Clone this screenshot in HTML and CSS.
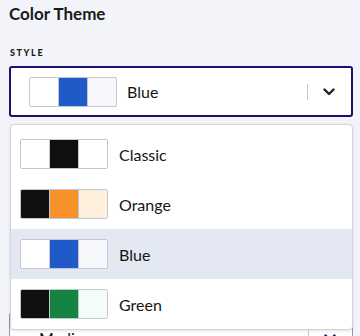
FILE: index.html
```html
<!DOCTYPE html>
<html lang="en">

<head>
    <meta charset="UTF-8">
    <meta name="viewport" content="width=device-width, initial-scale=1.0">
    <title>Color Theme</title>
    <link rel="stylesheet" href="styles.css">
</head>

<body>
    <div class="painel">
        <h2 class="titulo">Color Theme</h2>

        <div class="campo">
            <label class="rotulo">Style</label>
            <div class="select ativo">
                <span class="swatch">
                    <span class="cor" style="background:#ffffff"></span>
                    <span class="cor" style="background:#1f5bc6"></span>
                    <span class="cor" style="background:#f5f7fa"></span>
                </span>
                <span class="valor">Blue</span>
                <span class="divisor"></span>
                <svg class="seta" width="12" height="8" viewBox="0 0 12 8">
                    <path d="M1.5 1.5 L6 6 L10.5 1.5" fill="none" stroke="#222" stroke-width="2.4" stroke-linecap="round" stroke-linejoin="round"/>
                </svg>
            </div>

            <ul class="menu">
                <li class="opcao">
                    <span class="swatch">
                        <span class="cor" style="background:#ffffff"></span>
                        <span class="cor" style="background:#101010"></span>
                        <span class="cor" style="background:#ffffff"></span>
                    </span>
                    <span class="valor">Classic</span>
                </li>
                <li class="opcao">
                    <span class="swatch">
                        <span class="cor" style="background:#101010"></span>
                        <span class="cor" style="background:#f7922a"></span>
                        <span class="cor" style="background:#fdf1de"></span>
                    </span>
                    <span class="valor">Orange</span>
                </li>
                <li class="opcao selecionada">
                    <span class="swatch">
                        <span class="cor" style="background:#ffffff"></span>
                        <span class="cor" style="background:#1f5bc6"></span>
                        <span class="cor" style="background:#f5f7fa"></span>
                    </span>
                    <span class="valor">Blue</span>
                </li>
                <li class="opcao">
                    <span class="swatch">
                        <span class="cor" style="background:#101010"></span>
                        <span class="cor" style="background:#148540"></span>
                        <span class="cor" style="background:#f3fdf8"></span>
                    </span>
                    <span class="valor">Green</span>
                </li>
            </ul>
        </div>

        <div class="campo campo-tamanho">
            <label class="rotulo">Size</label>
            <div class="select">
                <span class="valor texto-medio">Medium</span>
                <span class="divisor"></span>
                <svg class="seta" width="12" height="8" viewBox="0 0 12 8">
                    <path d="M1.5 1.5 L6 6 L10.5 1.5" fill="none" stroke="#1b0f70" stroke-width="2.4" stroke-linecap="round" stroke-linejoin="round"/>
                </svg>
            </div>
        </div>
    </div>
</body>

</html>
```

FILE: styles.css
```css
/* Estilização Página */
* {
    box-sizing: border-box;
    font-family: 'Lato', 'Open Sans', sans-serif;
    margin: 0;
    padding: 0;
}

body {
    background-color: #f3f4f9;
    color: #111;
}

.painel {
    padding: 2px 7px 0 9px;
}

.titulo {
    font-size: 17px;
    font-weight: 700;
    line-height: 24px;
    color: #1a1a1a;
}

.campo {
    position: relative;
    margin-top: 21px;
}

.campo-tamanho {
    margin-top: 176px;
}

.rotulo {
    display: block;
    font-size: 9px;
    font-weight: 900;
    letter-spacing: 1.6px;
    text-transform: uppercase;
    line-height: 12px;
    margin-left: 1px;
    margin-bottom: 7px;
    color: #1a1a1a;
}

.select {
    display: flex;
    align-items: center;
    height: 51px;
    padding: 0 16px 0 18px;
    background-color: #fff;
    border: 1px solid #9a9ca4;
    border-radius: 3px;
}

.select.ativo {
    border: 2px solid #1b0f70;
}

.swatch {
    display: flex;
    width: 88px;
    height: 30px;
    border: 1px solid #c3c6d0;
    border-radius: 2px;
    overflow: hidden;
    flex-shrink: 0;
}

.cor {
    flex: 1;
}

.cor + .cor {
    border-left: 1px solid #c3c6d0;
}

.valor {
    font-size: 16px;
    margin-left: 10px;
    flex: 1;
    color: #151515;
}

.texto-medio {
    margin-left: 11px;
}

.divisor {
    width: 1px;
    height: 16px;
    background-color: #c8c8cc;
    margin-right: 15px;
}

.seta {
    display: block;
}

.menu {
    position: absolute;
    top: 77px;
    left: 1px;
    right: 0;
    list-style: none;
    background-color: #fff;
    border: 1px solid #d3d5db;
    border-radius: 4px;
    box-shadow: 0 1px 3px rgba(0, 0, 0, 0.12);
    padding: 4px 0 0;
    z-index: 10;
}

.opcao {
    display: flex;
    align-items: center;
    height: 50px;
    padding: 0 9px;
}

.opcao .valor {
    margin-left: 11px;
}

.selecionada {
    background-color: #e4e8f3;
}
```
